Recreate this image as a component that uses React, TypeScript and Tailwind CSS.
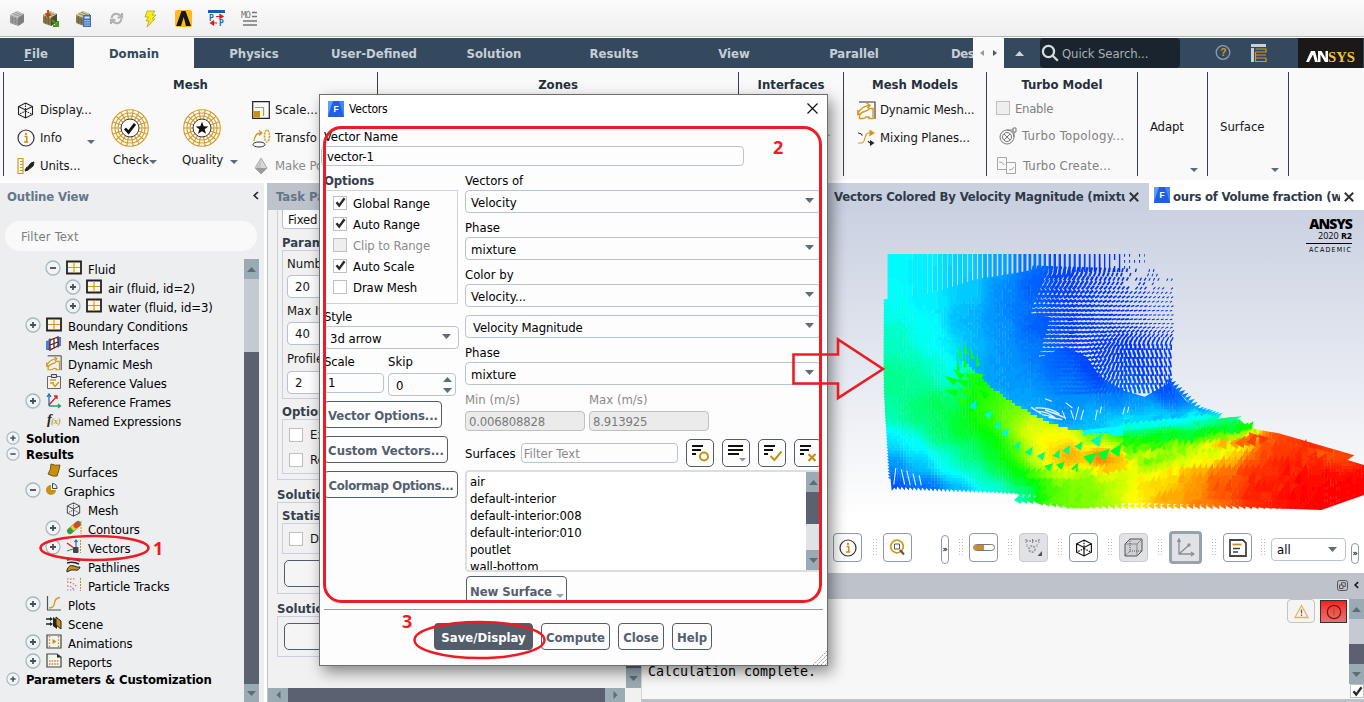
import React from "react";

type Kids = { children?: React.ReactNode };

/* ---------- velocity field ---------- */

const samples: number[][] = [
  [190, 230, 0.25], [300, 240, 0.23], [400, 250, 0.2], [500, 250, 0.15], [600, 250, 0.09], [700, 250, 0.04], [850, 250, 0.01],
  [190, 370, 0.26], [300, 350, 0.23], [420, 330, 0.19], [520, 330, 0.12], [600, 330, 0.06], [700, 330, 0.03],
  [200, 480, 0.31], [300, 450, 0.26], [400, 430, 0.17], [500, 430, 0.13], [620, 440, 0.06], [720, 450, 0.03], [900, 450, 0.02],
  [190, 600, 0.36], [280, 600, 0.35], [330, 560, 0.3], [360, 500, 0.23], [430, 500, 0.17], [520, 520, 0.13], [650, 560, 0.08], [800, 560, 0.04], [950, 560, 0.03],
  [190, 700, 0.33], [260, 700, 0.39], [330, 660, 0.43], [380, 640, 0.4], [355, 600, 0.25], [450, 640, 0.52], [480, 670, 0.56], [500, 600, 0.13], [550, 620, 0.13], [700, 640, 0.12], [850, 650, 0.1], [1000, 640, 0.05],
  [430, 560, 0.16], [600, 600, 0.12], [600, 500, 0.1], [560, 380, 0.1], [470, 560, 0.14],
  [190, 780, 0.22], [260, 790, 0.26], [330, 760, 0.4], [400, 740, 0.47], [470, 720, 0.52], [530, 700, 0.62], [590, 740, 0.74], [640, 765, 0.8], [620, 680, 0.14], [700, 705, 0.12], [580, 655, 0.15],
  [500, 655, 0.55], [560, 695, 0.62], [640, 735, 0.66], [700, 765, 0.72],
  [200, 850, 0.12], [280, 850, 0.18], [350, 840, 0.28], [420, 820, 0.38], [480, 800, 0.47], [540, 820, 0.54], [600, 820, 0.68], [640, 830, 0.8], [720, 800, 0.88], [700, 850, 0.88], [800, 830, 0.94], [860, 815, 0.92],
  [200, 920, 0.04], [300, 925, 0.07], [400, 930, 0.15], [500, 920, 0.25], [580, 935, 0.28], [440, 880, 0.3], [500, 860, 0.45], [560, 880, 0.5], [620, 900, 0.57], [700, 900, 0.58], [640, 960, 0.58], [740, 970, 0.62],
  [760, 900, 0.6], [850, 900, 0.68], [880, 930, 0.75], [820, 970, 0.65], [940, 920, 0.79], [1000, 880, 0.79], [1060, 900, 0.86], [1150, 900, 0.92], [1250, 900, 0.96], [1400, 920, 0.99], [1560, 910, 1],
  [1400, 830, 0.96], [1500, 830, 0.93], [1300, 780, 0.93], [1270, 840, 0.94], [1330, 900, 0.98], [1480, 900, 1],
  [760, 768, 0.55], [850, 775, 0.5], [900, 770, 0.4], [960, 780, 0.5], [950, 830, 0.6], [1000, 810, 0.62], [1050, 800, 0.7],
  [1100, 820, 0.78], [1180, 800, 0.85], [1100, 770, 0.5], [1180, 750, 0.48], [1200, 730, 0.42], [1080, 740, 0.35], [1150, 710, 0.25], [1060, 710, 0.2], [950, 710, 0.18], [860, 735, 0.2], [780, 730, 0.17],
  [900, 680, 0.12], [1050, 670, 0.07], [1000, 950, 0.83], [1100, 950, 0.88], [1440, 980, 1],
];

/* shear line between the jet and the recirculating air above it */
const shear = [[400, 540], [470, 612], [550, 672], [640, 722], [720, 750], [870, 768]];
function side(x: number, y: number) {
  if (x < 400 || x >= 870) return 0;
  const i = shear.findIndex((p, n) => n > 0 && x < p[0]);
  const [x0, y0] = shear[i - 1];
  const [x1, y1] = shear[i];
  return y < y0 + ((x - x0) / (x1 - x0)) * (y1 - y0) ? -1 : 1;
}
const sampleSide = samples.map(([x, y]) => side(x, y));

function speed(x: number, y: number) {
  let s = 0;
  let w = 0;
  const here = side(x, y);
  samples.forEach(([px, py, v], i) => {
    const d = (px - x) ** 2 + (py - y) ** 2;
    let k = Math.exp(-d / 1300) + 0.25 * Math.exp(-d / 4800) + 3 / (d + 900) ** 1.5;
    if (here * sampleSide[i] < 0) k *= 0.03;
    s += v * k;
    w += k;
  });
  return s / w;
}

function jet(v: number) {
  const q = Math.max(0, Math.min(1, Math.round(v * 90) / 90));
  const c = (n: number) => Math.round(255 * Math.max(0, Math.min(1, n)));
  if (q < 0.25) return `rgb(0,${c(q * 3.4 + 0.15)},255)`;
  if (q < 0.5) return `rgb(0,255,${c((0.5 - q) * 4)})`;
  if (q < 0.75) return `rgb(${c((q - 0.5) * 4)},255,0)`;
  return `rgb(255,${c((1 - q) * 4)},0)`;
}

function rand(i: number) {
  const s = Math.sin(i * 12.9898) * 43758.5453;
  return s - Math.floor(s);
}

function add(map: Map<string, string>, key: string, d: string) {
  map.set(key, (map.get(key) || "") + d);
}

const cells = new Map<string, string>();
for (let y = 210; y < 1000; y += 9)
  for (let x = 165; x < 1568; x += 9) {
    add(cells, jet(speed(x + 4, y + 4) + (rand(x + y * 7) - 0.5) * 0.012), `M${x} ${y}h9.6v9.6h-9.6z`);
  }

const cones = new Map<string, string>();
function cone(x: number, y: number, len: number, half: number, deg: number, v: number) {
  const a = (deg * Math.PI) / 180;
  const p = (u: number, w: number) =>
    `${(x + u * Math.cos(a) - w * Math.sin(a)).toFixed(1)} ${(y + u * Math.sin(a) + w * Math.cos(a)).toFixed(1)}`;
  add(cones, jet(v), `M${p(len, 0)}L${p(0, half)}L${p(0, -half)}z`);
}

/* cones carried by the jet near the floor */
for (let i = 0; i < 50; i++) {
  const x = 560 + i * 17;
  const top = x < 760 ? 880 : x < 1000 ? 875 - (x - 760) * 0.2 : 800;
  for (let y = top; y < 955; y += 24) {
    const v = speed(x, y) + (rand(x + y * 3) - 0.5) * 0.035;
    cone(x, y + 14, 38, 12, x < 900 ? -60 : -80, v);
  }
}
/* mixing layer */
for (let i = 0; i < 32; i++) {
  const x = 700 + i * 17;
  const c = 818 - i * 1.9;
  if (x > 740 && x < 1100) cone(x, c - 52, 36, 9, -22, 0.23 + rand(i) * 0.06);
  if (x > 860 && x < 1100) cone(x, c - 72, 36, 8, -24, 0.17 + rand(i + 9) * 0.06);
  if (x > 1060 && x < 1190) cone(x, c - 44, 38, 9, -18, 0.33 + rand(i + 4) * 0.08);
  if (x > 860)
    for (let j = 2; j >= 0; j--)
      cone(x + j * 6, c + j * 20 + (x > 1080 ? -6 : 0), 36, 15, -72 + rand(i + j) * 20, 0.44 + j * 0.09 + rand(i * 3 + j) * 0.09 + (i > 20 ? (i - 20) * 0.011 * j : 0));
}
/* cones leaving the left column */
[[385, 520], [402, 510], [420, 525], [437, 545], [380, 560], [400, 550], [372, 596], [392, 580], [376, 628], [405, 600], [400, 658], [425, 590], [440, 660], [415, 628], [445, 615], [465, 640], [450, 580]].forEach(([x, y], i) =>
  cone(x + 8, y + 12, 38, i < 6 ? 5 : 10, i < 6 ? -95 : -165 + (i % 4) * 9, 0.47 + rand(i) * 0.06),
);
[[430, 685, 0.22], [470, 710, 0.3], [500, 745, 0.32], [520, 765, 0.3], [555, 805, 0.36], [590, 822, 0.38], [625, 835, 0.38], [672, 832, 0.4], [700, 818, 0.38], [735, 805, 0.4], [645, 866, 0.42], [680, 862, 0.46], [725, 872, 0.46], [762, 842, 0.44], [803, 832, 0.46], [842, 822, 0.46], [878, 818, 0.48], [785, 792, 0.33]].forEach(
  ([x, y, v], i) => cone(x, y, x > 740 ? 38 : 26, x > 740 ? 16 : 11, -70 + rand(i) * 30, v),
);
/* ragged edges */
for (let i = 0; i < 60; i++) cone(176 + (i > 30 ? (i - 30) * 0.5 : 0), 362 + i * 9, 7, 5, 180, speed(180, 362 + i * 9));
for (let i = 0; i < 34; i++) cone(205 + i * 12, 918 + i * 0.5, 12, 6, 78, speed(205 + i * 12, 920));
for (let i = 0; i < 42; i++) cone(625 + i * 19, 962 + Math.min(i * 2.5, 10), 18, 11, 60, speed(625 + i * 19, 970));
for (let i = 0; i < 17; i++) cone(996 + i * 9, i < 10 ? 606 + i * 8.8 : 692 + (i - 10) * 3, 20, 7, -35, 0.06 + i * 0.01);
for (let i = 0; i < 10; i++) cone(1235 + i * 28, 772 + i * 7, 30, 16, -8, 0.91 + rand(i) * 0.04);

const strokes = new Map<string, string>();
/* inlet columns at the top */
for (let x = 190; x < 960; x += 14.5) {
  const w = Math.max(2, 15.5 - (x - 190) / 56);
  const end = x < 300 ? 352 : x < 540 ? 350 - (x - 300) * 0.25 : 294 - (x - 540) * 0.1;
  for (let y = 222; y < end; y += 18) {
    if (x > 840 && rand(x + y) < (x - 830) / 190) continue;
    add(strokes, jet(speed(x, y)) + "|" + w.toFixed(0), `M${x} ${y}v${x > 860 ? 8 : 18}`);
  }
}
/* recirculation on the right */
for (let y = 276; y < 650; y += 13)
  for (let x = 600; x < 1008; x += 13) {
    const thin = (x - 590) / 420;
    const down = Math.max(0, Math.min(1, (y - 430) / 90)) * Math.max(0, Math.min(1, (x - 740) / 140));
    const base = -75 + Math.min(1, (y - 276) / 120) * 63;
    const a = ((base * (1 - down) - 100 * down) * Math.PI) / 180;
    const l = 20 - thin * (13 - down * 11);
    if (y < 340 && x > 860 && rand(x * y) < 0.45) continue;
    const ox = Math.round(y / 13) % 2 ? 4 : 0;
    const w = Math.max(2.5, 10 - thin * 8 + down * 3);
    const shade = 1 - 0.35 * Math.min(1, (x - 600) / 140);
    add(strokes, jet(speed(x, y) * shade) + "|" + w.toFixed(0), `M${x + ox} ${y}l${(l * Math.cos(a)).toFixed(1)} ${(l * Math.sin(a)).toFixed(1)}`);
  }

const OUTLINE =
  "M172 358L184 356L300 343L440 298L560 278L620 266L640 280L618 330L600 400L655 412L640 470L620 535L700 500L760 530L800 590L870 632L930 650L1005 606L1050 662L1090 687L1150 706L1138 722L1205 718L1235 745L1320 760L1540 826L1520 840L1568 855L1568 945L1444 990L1300 985L1140 975L1000 972L880 968L760 985L720 985L650 965L600 942L500 936L350 928L205 920L194 932L186 850L175 700L170 560z";

function Plot() {
  return (
    <svg className="h-[307px] w-[539px] shrink-0" viewBox="0 90 1568 921" preserveAspectRatio="none">
      <defs>
        <clipPath id="body">
          <path d={OUTLINE} />
        </clipPath>
      </defs>
      <g clipPath="url(#body)">
        {[...cells].map(([c, d]) => (
          <path key={c} d={d} fill={c} />
        ))}
      </g>
      {[...strokes].map(([k, d]) => (
        <path key={k} d={d} stroke={k.split("|")[0]} strokeWidth={k.split("|")[1]} fill="none" />
      ))}
      {[...cones].map(([c, d]) => (
        <path key={c} d={d} fill={c} />
      ))}
      <g stroke="#eef1fa" fill="none" strokeWidth="4">
        <path d="M612 684q40 -4 70 18M622 694q30 2 50 22M640 690q30 10 60 24M632 704q20 2 40 12M650 712l40 6M600 682l30 20" />
        <path strokeWidth="3" d="M690 692l10 26M715 690l8 26M738 680l-10 40M752 690l-8 30M792 690l-6 30M804 680l-4 20M872 682l-6 22M884 680l-4 18M700 668l20 16M640 656l20 8" />
        <path strokeWidth="3" d="M206 864l-6 50M222 868l10 46M238 872l10 44M256 880l8 36M274 886l6 30" />
      </g>
    </svg>
  );
}

/* ---------- small parts ---------- */

function Caret({ c = "#5f6b76", up = false, small = false }: { c?: string; up?: boolean; small?: boolean }) {
  return (
    <svg className={small ? "h-[4px] w-[8px]" : "h-[5px] w-[9px]"} viewBox="0 0 8 4" preserveAspectRatio="none">
      <path d={up ? "M0 4L4 0L8 4z" : "M0 0h8L4 4z"} fill={c} />
    </svg>
  );
}

function FluentIcon() {
  return (
    <svg className="size-4 shrink-0" viewBox="0 0 16 16">
      <path d="M0 0h16v16H0z" fill="#3f86f7" />
      <path d="M5 0h6l5 16H0z" fill="#1f5fe0" />
      <path d="M0 0h5L0 13z" fill="#5aa0ff" />
      <text x="5.4" y="11.3" fontSize="8.5" fontWeight="bold" fill="#fff" fontFamily="Liberation Sans, sans-serif">F</text>
    </svg>
  );
}

function Check({ on = false, dis = false }: { on?: boolean; dis?: boolean }) {
  return (
    <span className={"flex size-[14px] shrink-0 items-center justify-center border border-[#c0c0c0] " + (dis ? "bg-[#eeeeee]" : "bg-white")}>
      {on && (
        <svg className="size-[11px]" viewBox="0 0 11 11">
          <path d="M1.5 5.2L4.2 8.6L9.5 1.2" fill="none" stroke="#2b2b2b" strokeWidth="2.4" />
        </svg>
      )}
    </span>
  );
}

function CubeIcon({ c = "#222", s = "size-[17px]" }: { c?: string; s?: string }) {
  return (
    <svg className={s} viewBox="0 0 17 17" fill="none" stroke={c} strokeWidth="1.1">
      <path d="M8.5 1L15.5 4.5V12.5L8.5 16L1.5 12.5V4.5zM1.5 4.5L8.5 8L15.5 4.5M8.5 8V16" />
      <path strokeDasharray="1.5 1" d="M8.5 1V9L1.5 12.5M8.5 9L15.5 12.5" />
    </svg>
  );
}

function InfoIcon() {
  return (
    <svg className="size-[18px]" viewBox="0 0 18 18">
      <circle cx="9" cy="9" r="8" fill="none" stroke="#333" strokeWidth="1.2" />
      <path d="M7.5 7.5h2.2v5.3M7 13h4.2" stroke="#c98f12" strokeWidth="1.5" fill="none" />
      <circle cx="9" cy="4.9" r="1.1" fill="#c98f12" />
    </svg>
  );
}

function DynIcon({ s = "size-[19px]" }: { s?: string }) {
  return (
    <svg className={s} viewBox="0 0 19 19" fill="none">
      <path d="M2 1h16v17" stroke="#333" strokeWidth="1.1" />
      <path d="M1 12.500Q4 5.500 12 4.500M9.500 2l3.500 2.300-2.500 3M.8 9v4.500l4-1M2.500 17.500v-3q1-3 5-4t5-3h3.500v10h-4v-1.500h-3q-1 1.500-3 1.500z" stroke="#d39a22" strokeWidth="1.400" />
    </svg>
  );
}

function WheelIcon({ star = false }: { star?: boolean }) {
  const spokes = Array.from({ length: 18 }, (_, i) => {
    const a = (i * Math.PI) / 9;
    return `M${19 + 9 * Math.cos(a)} ${19 + 9 * Math.sin(a)}L${19 + 18.5 * Math.cos(a)} ${19 + 18.5 * Math.sin(a)}`;
  }).join("");
  return (
    <svg className="size-[38px]" viewBox="0 0 38 38" fill="none">
      <g stroke="#d39a22" strokeWidth="1.1">
        <circle cx="19" cy="19" r="18.3" />
        <circle cx="19" cy="19" r="15" />
        <circle cx="19" cy="19" r="12" />
        <path d={spokes} />
      </g>
      <circle cx="19" cy="19" r="9" fill="#fff" stroke="#333" />
      {star ? (
        <path d="M19 12.800l1.700 4.400 4.700.2-3.700 2.900 1.300 4.500-4-2.600-4 2.600 1.300-4.500-3.700-2.900 4.700-.2z" fill="#111" />
      ) : (
        <path d="M14 19.500l3.500 3.800 6.500-8.500" stroke="#111" strokeWidth="2.800" />
      )}
    </svg>
  );
}

/* ---------- top of the window ---------- */

function Cube3({ gray = false, children }: { gray?: boolean } & Kids) {
  return (
    <svg className="size-[17px]" viewBox="0 0 17 17">
      <path d="M1 5l7-4 7 3v8l-6 4-8-3z" fill={gray ? "#a3a3a3" : "#8f8455"} />
      <path d="M1 5l7-4 7 3-6 4z" fill={gray ? "#c6c6c6" : "#d6cda0"} />
      <path d="M9 8l6-4v8l-6 4z" fill={gray ? "#828282" : "#4f4727"} />
      <path d="M3.500 6.200v8M6.300 7v8M1 8l8 3 6-4M1 10.500l8 3 6-4M11 6.800v8M13 5.500v8M3.500 3.600l8 3M6 2.300l7.500 3" stroke={gray ? "#787878" : "#5d532c"} strokeWidth=".6" fill="none" />
      {children}
    </svg>
  );
}

function QuickBar() {
  return (
    <div className="flex h-[38px] items-center gap-[16px] border-b border-white bg-linear-to-b from-[#fbfbfb] to-[#efefef] pl-[9px] shadow-[inset_0_-1px_0_#b4b4b4]">
      <Cube3 gray />
      <Cube3>
        <path d="M6 0v5M3.500 3.500l2.500 3 2.500-3" stroke="#c03a1c" strokeWidth="1.800" fill="none" />
        <path d="M10 10l5.500 5.500M16 11v5h-5" stroke="#3f9a22" strokeWidth="2.200" fill="none" />
      </Cube3>
      <Cube3>
        <path d="M8 5h8v12H8z" fill="#3f6fb8" />
        <path d="M9.500 6.500h5v2h-5zM9.500 10h1.200v1.200H9.500zM11.500 10h1.200v1.200h-1.200zM13.400 10h1.200v1.200h-1.200zM9.500 12.300h1.200v1.200H9.500zM11.500 12.300h1.200v1.200h-1.200zM13.400 12.300h1.200v1.200h-1.200zM9.500 14.500h1.200v1.200H9.500zM11.500 14.500h1.200v1.200h-1.200zM13.400 14.500h1.200v1.200h-1.200z" fill="#dbe8fb" />
      </Cube3>
      <svg className="size-[17px]" viewBox="0 0 17 17" fill="none" stroke="#b2b2b2" strokeWidth="2.200">
        <path d="M3.500 8Q5 3 9 4t3.500 2.500M13.500 9Q12 14 8 13T4.500 10.500M14 3v4.500H9.500M3 14V9.800h4.500" />
      </svg>
      <svg className="size-[18px]" viewBox="0 0 18 18">
        <path d="M6 1h8l-3 4h4l-4 4h3L6 17l2-6H5l2.500-4H4z" fill="#f6ec1c" stroke="#a89d18" strokeWidth=".7" />
      </svg>
      <svg className="size-[17px]" viewBox="0 0 17 17">
        <rect width="17" height="17" rx="2" fill="#fdbb1f" />
        <path d="M6.500 1h4l5.500 15h-5L8.700 7 6 16H1.200z" fill="#161616" />
      </svg>
      <svg className="size-[17px]" viewBox="0 0 17 17">
        <path d="M0 0h17v3H0z" fill="#0d5fb8" />
        <text x="1" y="10.500" fontSize="8" fontWeight="bold" fill="#1b66bb" fontFamily="DejaVu Sans Mono, monospace">P</text>
        <text x="11" y="16" fontSize="8" fontWeight="bold" fill="#1b66bb" fontFamily="DejaVu Sans Mono, monospace">P</text>
        <path d="M8 6.500h5M12 4.500l3 2-3 2zM9 13H5M5.500 11l-3 2 3 2z" stroke="#ee1010" fill="#ee1010" strokeWidth="1.200" />
      </svg>
      <svg className="size-[17px]" viewBox="0 0 17 17">
        <text x="0" y="8" fontSize="9" fill="#777" fontFamily="DejaVu Sans Mono, monospace" textLength="10">MO</text>
        <path d="M11 2.500h5M11 6.500h5M2 11h14M2 15h14" stroke="#777" strokeWidth="1.600" />
      </svg>
    </div>
  );
}

function MenuBar() {
  const tab = "w-[120px] shrink-0 text-center";
  return (
    <div className="flex h-[30px] items-center bg-[#34495e] font-bold text-[#c6cfd8]">
      <div className="w-[74px] shrink-0 pr-[2px] text-center leading-[33px]"><span className="underline underline-offset-2">F</span>ile</div>
      <div className="h-[30px] w-[120px] shrink-0 bg-[#f9f9f9] text-center leading-[31px] text-[#34495e]">Domain</div>
      <div className="flex w-[779px] overflow-hidden leading-[33px]">
        <div className={tab}>Physics</div>
        <div className={tab}>User-Defined</div>
        <div className={tab}>Solution</div>
        <div className={tab}>Results</div>
        <div className={tab}>View</div>
        <div className={tab}>Parallel</div>
        <div className="w-[59px] shrink-0 pl-[37px] tracking-[-0.400px]">Des</div>
      </div>
      <div className="flex h-[30px] w-[31px] shrink-0 items-center justify-around bg-[#f9f9f9] px-[2px]">
        <svg className="h-[6px] w-[4px]" viewBox="0 0 4 6"><path d="M4 0v6L0 3z" fill="#999" /></svg>
        <svg className="h-[6px] w-[4px]" viewBox="0 0 4 6"><path d="M0 0v6l4-3z" fill="#555" /></svg>
      </div>
      <div className="flex w-[36px] shrink-0 justify-center pr-[6px]"><Caret up c="#cbd3da" /></div>
      <div className="flex h-[30px] w-[140px] shrink-0 items-center gap-[3px] rounded bg-[#19242e] pl-px font-normal text-[#aab0b5]">
        <svg className="size-[18px]" viewBox="0 0 18 18" fill="none" stroke="#d5dade" strokeWidth="2.300"><circle cx="7.500" cy="7.500" r="5.600" /><path d="M11.500 11.500l5.300 5.300" /></svg>
        <span className="pt-px tracking-[-0.120px]">Quick Search...</span>
      </div>
      <svg className="ml-[35px] size-[16px] shrink-0" viewBox="0 0 16 16">
        <circle cx="8" cy="7.500" r="6.800" fill="none" stroke="#8f9eab" strokeWidth="1.300" />
        <text x="5.200" y="11.300" fontSize="10" fontWeight="bold" fill="#d39a22" fontFamily="Liberation Sans, sans-serif">?</text>
      </svg>
      <svg className="ml-[20px] size-[18px] shrink-0" viewBox="0 0 18 18">
        <path d="M0 0h15v3H0zM0 4h3v14H0z" fill="#c8d0dc" />
        <path d="M4.500 5h10.500v3H4.500M4.500 8v3h10.500M4.500 11v3h10.500M15 14v3.500H4.500V14" fill="none" stroke="#d39a22" strokeWidth="1.200" />
      </svg>
      <div className="mr-px ml-auto flex h-[30px] w-[65px] items-center bg-[#1b1917] pt-[5px] pl-[8px]">
        <svg className="h-[16px] w-[54px]" viewBox="0 0 54 16">
          <path d="M0 14L5 3h4l3 11H9L7 6.500 3 14zM12 14V3h3.500l4 7V3H22v11h-3l-4.500-7.500V14z" fill="#fff" />
          <text x="22" y="14" fontSize="15.500" fill="#edc33d" fontFamily="Liberation Serif, serif" textLength="27" lengthAdjust="spacingAndGlyphs">SYS</text>
        </svg>
      </div>
    </div>
  );
}

function Group({ title, w, children }: { title?: string; w: string } & Kids) {
  return (
    <div className={"h-[104px] shrink-0 border-l border-[#34404f] " + w}>
      <div className="h-[22px] pt-[5px] text-center font-bold text-[#25303d]">{title}</div>
      {children}
    </div>
  );
}

function Tool({ icon, children, cls = "" }: { icon: React.ReactNode; cls?: string } & Kids) {
  return (
    <div className={"flex h-[28px] items-center whitespace-nowrap " + cls}>
      <span className="flex w-[23px] shrink-0">{icon}</span>
      {children}
    </div>
  );
}

function Ribbon() {
  return (
    <div className="flex h-[112px] bg-[#f9f9f9] pt-[4px] pl-[3px]">
      <Group title="Mesh" w="w-[374px]">
        <div className="flex pl-[13px]">
          <div className="flex w-[94px] flex-col pt-[2px] tracking-[-0.080px]">
            <Tool icon={<CubeIcon />}>Display...</Tool>
            <Tool icon={<InfoIcon />}>Info<span className="mt-[8px] ml-auto pr-[16px]"><Caret small /></span></Tool>
            <Tool icon={<svg className="size-[18px]" viewBox="0 0 18 18" fill="none"><path d="M1 1.500h5v15H1zM3 4.500h3M3 7.500h3M3 10.500h3M3 13.500h3" stroke="#d39a22" strokeWidth="1.200" /><path d="M9 12l5-6 3-1-1 4-5 4-3 1zM8 13l2-3" fill="#222" stroke="#222" /></svg>}>Units...</Tool>
          </div>
          <div className="flex w-[38px] flex-col items-center pt-[15px]">
            <WheelIcon />
            <div className="mt-[5px] flex items-center pl-[10px] whitespace-nowrap">Check<span className="pt-[4px]"><Caret small /></span></div>
          </div>
          <div className="ml-[32px] flex w-[60px] flex-col pt-[15px]">
            <div className="pl-[2px]"><WheelIcon star /></div>
            <div className="mt-[5px] flex items-center gap-[7px] pl-px tracking-[-0.100px] whitespace-nowrap">Quality<span className="pt-[4px]"><Caret small /></span></div>
          </div>
          <div className="ml-[11px] w-[120px] overflow-hidden pt-[2px]">
            <Tool icon={<svg className="size-[18px]" viewBox="0 0 18 18" fill="none"><path d="M.7.7h16.600v16.600H.7z" stroke="#222" strokeWidth="1.200" /><path d="M3 6.500h8.500V15" stroke="#d39a22" strokeWidth="1.200" /><path d="M1.500 10h6.500v6.500H1.500z" fill="#c98f12" /></svg>}>Scale...</Tool>
            <Tool icon={<svg className="size-[19px]" viewBox="0 0 19 19" fill="none"><path d="M2 12Q3 4 9 4M7 1.500L10 4 7 6.500" stroke="#d39a22" strokeWidth="1.300" /><ellipse cx="7" cy="15.500" rx="6" ry="2.500" stroke="#333" /><ellipse cx="15" cy="7" rx="2.500" ry="6" stroke="#d39a22" strokeWidth="1.500" strokeDasharray="2 1" /></svg>}>Transfo</Tool>
            <Tool cls="text-[#8a8a8a]" icon={<svg className="size-[18px]" viewBox="0 0 18 18"><path d="M9 1l6 10-6 6-6-6z" fill="#d8d8d8" stroke="#a5a5a5" /><path d="M9 1v16l-6-6z" fill="#c5c5c5" /><path d="M3 11h12L9 17z" fill="#9c9c9c" /></svg>}>Make Po</Tool>
          </div>
        </div>
      </Group>
      <Group title="Zones" w="w-[361px]" />
      <Group title="Interfaces" w="w-[105px]">
        <div className="pt-[30px] pl-[88px] text-[#999]">.</div>
      </Group>
      <Group title="Mesh Models" w="w-[143px]">
        <div className="pt-[2px] pl-[13px] tracking-[-0.200px]">
          <Tool icon={<DynIcon />}>Dynamic Mesh...</Tool>
          <Tool cls="tracking-[-0.100px]" icon={<svg className="size-[18px]" viewBox="0 0 18 18" fill="none" strokeWidth="1.200"><path d="M1 14h3q3 0 4-5t4-5h3" stroke="#d39a22" /><path d="M13 1.500L17 4l-4 2.500z" fill="#c98f12" stroke="#d39a22" /><path d="M1 4q3 0 4.500 2.500M11 12q1 2 3 2" stroke="#222" /><path d="M13 11l4.500 3-4.500 3z" fill="#222" /></svg>}>Mixing Planes...</Tool>
        </div>
      </Group>
      <Group title="Turbo Model" w="w-[151px]">
        <div className="pl-[9px] text-[#808080]">
          <div className="flex h-[27px] items-center gap-[5px] tracking-[-0.300px]"><Check dis /><span className="pt-[2px]">Enable</span></div>
          <Tool cls="pt-px pl-[3px] tracking-[0.350px]" icon={<svg className="size-[18px]" viewBox="0 0 18 18" fill="none" stroke="#777"><circle cx="8" cy="10" r="7" /><circle cx="8" cy="10" r="4.500" /><path d="M5 7l6 6M11 7l-6 6M8 3h6M14 1h3v4h-3zM15 5v5" /></svg>}>Turbo Topology...</Tool>
          <Tool cls="mt-[2px] pt-px pl-px tracking-[0.150px]" icon={<svg className="size-[19px]" viewBox="0 0 19 19" fill="none" stroke="#a5a5a5"><path d="M.5 1.500h9v12h-9zM9.500 6.500h9v11h-9zM2 6q3-1 5 3M12 14q4 0 5-3" /></svg>}><span className="pl-[3px]">Turbo Create...</span></Tool>
        </div>
      </Group>
      <Group w="w-[70px]">
        <div className="flex h-[82px] flex-col pt-[25px] pl-[12px] tracking-[-0.150px]">Adapt<span className="mt-auto pb-[4px] pl-[40px]"><Caret small /></span></div>
      </Group>
      <Group w="w-[81px]">
        <div className="flex h-[82px] flex-col pt-[25px] pl-[12px]">Surface<span className="mt-auto pb-[4px] pl-[51px]"><Caret small /></span></div>
      </Group>
      <Group w="w-[60px]" />
    </div>
  );
}

/* ---------- outline tree ---------- */

const treeIcons: Record<string, React.ReactNode> = {
  grid: <><path d="M1 1.500h14v12H1z" stroke="#222" strokeWidth="1.800" fill="#fff8e8" /><path d="M8 2v11M2 7.500h12" stroke="#d39a22" strokeWidth="1.200" /></>,
  iface: <><path d="M0 5l5-1v10H0zM11 1h4v9h-4z" fill="#4a7de0" /><path d="M4 4l8-3v9l-8 4zM4 9l8-3M8 3v9" fill="#fff" stroke="#5b1212" strokeWidth="1.200" /><circle cx="4" cy="4" r="1" fill="#fff" stroke="#5b1212" /><circle cx="4" cy="13" r="1" fill="#fff" stroke="#5b1212" /><circle cx="12" cy="10" r="1" fill="#fff" stroke="#5b1212" /><circle cx="12" cy="2" r="1" fill="#fff" stroke="#5b1212" /></>,
  clip: <><path d="M1.500 2.500h13v12h-13z" stroke="#666" fill="#f7f3ea" /><path d="M5.500.5h5v3h-5z" stroke="#444" fill="#ddd" /><path d="M4 6h6M4 9h4M7 10l2 2.500L13 8" stroke="#d39a22" strokeWidth="1.400" /></>,
  axes: <><path d="M3 13h11M12 11l2.500 2-2.500 2" stroke="#27a05a" strokeWidth="1.300" /><path d="M3 1v12M1 4l2-3 2 3" stroke="#1d6fc0" strokeWidth="1.300" /><path d="M3 12l8-9M8 3h3v3" stroke="#e02020" strokeWidth="1.300" /></>,
  fx: <><text x="1" y="12" fontSize="14" fontStyle="italic" fontWeight="bold" fill="#222" fontFamily="Liberation Serif, serif">f</text><text x="5" y="12" fontSize="9" fontStyle="italic" fill="#d39a22" fontFamily="Liberation Serif, serif" fontWeight="bold" textLength="10">(x)</text></>,
  surf: <path d="M5 1q4 2 9 1-1 6-3 11-4 1-9-2 3-4 3-10z" fill="#c98f12" stroke="#7a5507" />,
  pie: <><path d="M6 3a5 5 0 1 0 5 5H6z" fill="#c98f12" /><path d="M7.500 1.500v5H12A5 5 0 0 0 7.500 1.500z" stroke="#444" /></>,
  cont: <><path d="M4 11l8-7" stroke="#3a9a3a" strokeWidth="6" strokeLinecap="round" /><path d="M6 9.200l5-4.400" stroke="#e7cf2a" strokeWidth="5" /><path d="M10 5.700l1.500-1.300" stroke="#e0402a" strokeWidth="5" strokeLinecap="round" /><path d="M15 1v13" stroke="#c98f12" strokeDasharray="2 1" /></>,
  vec: <><path d="M1 4l7 5" stroke="#e02020" strokeWidth="1.300" /><path d="M10 8V1M8.500 3L10 1l1.500 2" stroke="#1d6fc0" strokeWidth="1.200" /><path d="M1 12l6-2" stroke="#27a05a" strokeWidth="1.300" /><rect x="7" y="8" width="5.500" height="6" rx="1" fill="#444" /><path d="M14.500 1v13" stroke="#c98f12" strokeDasharray="2 1" /></>,
  pathl: <><path d="M1 2q6-2 13 1M1 5q6-2 12 1" stroke="#222" strokeWidth="1.400" /><path d="M1 12q2-6 7-4t6 1q-1 4-5 3t-8 2z" fill="#c98f12" stroke="#222" /></>,
  part: <><path d="M1 2h8M1 5q6 0 10 5M1 9q5 0 7 4" stroke="#e05a5a" strokeWidth="1.200" strokeDasharray="1.500 1.500" /><path d="M1 13h9" stroke="#6fa0e0" strokeDasharray="1.500 1.500" /><path d="M14.500 1v13" stroke="#c98f12" strokeDasharray="2 1" /></>,
  plot: <><path d="M1.500 0v14H15" stroke="#555" strokeWidth="1.200" /><path d="M3 12q5 0 5.500-5T14 1.500" stroke="#d39a22" strokeWidth="1.400" /></>,
  scene: <><path d="M7 2l4 3v9L7 11z" fill="#222" /><path d="M10 2l5 4v8l-5-4z" fill="#c98f12" stroke="#222" /><path d="M0 4h5M0 9h5" stroke="#222" strokeWidth="1.300" /><path d="M4 2l3 2-3 2zM4 7l3 2-3 2z" fill="#222" /></>,
  anim: <><path d="M1 1h14v13H1z" stroke="#444" strokeWidth="1.200" fill="#f4f4f4" /><path d="M3.500 2v12M12.500 2v12" stroke="#c98f12" strokeWidth="1.400" strokeDasharray="1.600 1.600" /><path d="M6.500 5l4 2.500-4 2.500z" fill="#c98f12" /></>,
  rep: <><path d="M1 1h10l4 3v10H1z" stroke="#444" strokeWidth="1.200" fill="#f4f4f4" /><path d="M11 1v3.500h4z" fill="#222" /><path d="M3 8h10M3 11h10" stroke="#c98f12" strokeWidth="1.600" strokeDasharray="1.600 1" /></>,
};

type Node = [string, number, string, string];
const tree: Node[] = [
  ["Fluid", 2, "-", "grid"], ["air (fluid, id=2)", 3, "+", "grid"], ["water (fluid, id=3)", 3, "+", "grid"],
  ["Boundary Conditions", 1, "+", "grid"], ["Mesh Interfaces", 1, "", "iface"], ["Dynamic Mesh", 1, "", "dyn"],
  ["Reference Values", 1, "", "clip"], ["Reference Frames", 1, "+", "axes"], ["Named Expressions", 1, "", "fx"],
  ["Solution", 0, "+", ""], ["Results", 0, "-", ""], ["Surfaces", 1, "", "surf"], ["Graphics", 1, "-", "pie"],
  ["Mesh", 2, "", "cube"], ["Contours", 2, "+", "cont"], ["Vectors", 2, "+", "vec"], ["Pathlines", 2, "", "pathl"],
  ["Particle Tracks", 2, "", "part"], ["Plots", 1, "+", "plot"], ["Scene", 1, "", "scene"], ["Animations", 1, "+", "anim"],
  ["Reports", 1, "+", "rep"], ["Parameters & Customization", 0, "+", ""],
];
const indent = ["pl-[6px]", "pl-[25px]", "pl-[45px]", "pl-[65px]"];

function Expander({ s, big }: { s: string; big: boolean }) {
  return (
    <svg className={big ? "mb-px size-[16px] shrink-0" : "size-[14px] shrink-0"} viewBox="0 0 16 16">
      {s && (
        <>
          <circle cx="8" cy="8" r="7" fill="#f1f3f5" stroke="#a9b7be" strokeWidth="1.300" />
          <path d={s === "+" ? "M5 8h6M8 5v6" : "M5 8h6"} stroke="#44505c" strokeWidth="1.800" />
        </>
      )}
    </svg>
  );
}

function Outline() {
  return (
    <div className="flex w-[264px] shrink-0 flex-col bg-[#eceef0]">
      <div className="flex h-[27px] items-center justify-between pr-[5px] pl-[7px] font-bold text-[#64768a]">
        <span className="tracking-[-0.150px]">Outline View</span>
        <svg className="mb-[3px] h-[9px] w-[6px]" viewBox="0 0 6 9"><path d="M5 1L1.200 4.500 5 8" stroke="#222" strokeWidth="1.600" fill="none" /></svg>
      </div>
      <div className="mt-[11px] ml-[5px] flex h-[30px] w-[252px] items-center rounded-full bg-[#f9f9f9] pt-px pl-[16px] tracking-[0.150px] text-[#7d7d7d]">Filter Text</div>
      <div className="mt-[8px] flex h-[443px]">
        <div className="w-[244px] tracking-[-0.120px]">
          {tree.map(([t, l, e, ic]) => (
            <div key={t} className={"flex items-center whitespace-nowrap text-black " + indent[l] + (l ? " h-[19px]" : " h-[16px] font-bold")}>
              <Expander s={e} big={l > 0} />
              {l > 0 && (
                <span className={"mb-px flex shrink-0 " + (ic === "pie" ? "w-[23px] pl-[4px]" : "w-[27px] pl-[5px]")}>
                  {ic === "cube" ? <CubeIcon s="size-[15px]" c="#444" /> : ic === "dyn" ? <DynIcon s="size-[16px]" /> : <svg className="size-[16px]" viewBox="0 0 16 16" fill="none">{treeIcons[ic]}</svg>}
                </span>
              )}
              <span className={l ? "pt-[2px]" : "pt-px pl-[6px]"}>{t}</span>
            </div>
          ))}
        </div>
        <div className="flex w-[15px] flex-col bg-[#5b6170]">
          <div className="flex h-[20px] items-center justify-center bg-[#9aabb3]"><Caret up /></div>
          <div className="h-[73px] bg-[#c3cad1]" />
          <div className="mt-auto flex h-[18px] items-center justify-center bg-[#9aabb3]"><Caret /></div>
        </div>
      </div>
    </div>
  );
}

/* ---------- task page ---------- */

function Task() {
  const box = "border border-[#c9cfdf]";
  const val = "flex h-[23px] w-[200px] items-center rounded border border-[#b8c1cd] bg-[#fdfdfd] pt-px pl-[7px]";
  return (
    <div className="flex w-[374px] shrink-0 flex-col overflow-hidden border-l border-[#c0c4ca] bg-[#f1f1f1]">
      <div className="flex h-[27px] shrink-0 items-center bg-[#bec3cb] pl-[8px] font-bold text-[#64768a]">Task Pa</div>
      <div className="flex h-[478px]">
        <div className="w-[358px] pl-[9px]">
          <div className="h-[270px] border-b border-l border-[#c9cfdf] pl-[4px]">
            <div className="flex h-[19px] w-[200px] items-center rounded-b border border-t-0 border-[#b8c1cd] bg-[#fdfdfd] pt-px pl-[5px] tracking-[-0.200px]">Fixed</div>
            <div className="flex h-[21px] items-center pt-[6px] font-bold text-[#34404f]">Param</div>
            <div className={"h-[149px] pl-[4px] " + box}>
              <div className="flex h-[24px] items-center pt-px">Numb</div>
              <div className={val}>20</div>
              <div className="flex h-[24px] items-center pt-px">Max It</div>
              <div className={val}>40</div>
              <div className="flex h-[26px] items-center pt-px">Profile</div>
              <div className={val}>2</div>
            </div>
            <div className="flex h-[20px] items-center pt-[5px] font-bold text-[#34404f]">Option</div>
            <div className={"h-[55px] pt-[2px] pl-[6px] " + box}>
              <div className="flex h-[25px] items-center gap-[7px]"><Check />Ex</div>
              <div className="flex h-[25px] items-center gap-[7px]"><Check />Re</div>
            </div>
          </div>
          <div className="flex h-[22px] items-center pt-[7px] font-bold text-[#34404f]">Solutio</div>
          <div className={"h-[92px] pl-[4px] " + box}>
            <div className="flex h-[20px] items-center pt-[6px] font-bold text-[#34404f]">Statis</div>
            <div className={"flex h-[31px] items-center gap-[7px] pl-[6px] " + box}><Check />Da</div>
            <div className="mt-[6px] ml-[2px] h-[27px] w-[200px] rounded-[5px] border border-[#535c69] bg-[#f5f5f5]" />
          </div>
          <div className="flex h-[22px] items-center pt-[7px] font-bold text-[#34404f]">Solutio</div>
          <div className={"h-[41px] pt-[6px] pl-[6px] " + box}>
            <div className="h-[27px] w-[200px] rounded-[5px] border border-[#535c69] bg-[#f5f5f5]" />
          </div>
        </div>
        <div className="flex w-[15px] flex-col justify-end bg-[#5b6170]">
          <div className="flex h-[20px] items-center justify-center bg-[#9aabb3]"><Caret /></div>
        </div>
      </div>
      <div className="flex h-[14px] w-[357px] items-center justify-between bg-[#5b6170]">
        <div className="flex h-[14px] w-[20px] items-center justify-center bg-[#9aabb3]"><svg className="h-[8px] w-[5px]" viewBox="0 0 4 8"><path d="M4 0v8L0 4z" fill="#5f6b76" /></svg></div>
        <div className="flex h-[14px] w-[20px] items-center justify-center bg-[#9aabb3]"><svg className="h-[8px] w-[5px]" viewBox="0 0 4 8"><path d="M0 0v8l4-4z" fill="#5f6b76" /></svg></div>
      </div>
    </div>
  );
}

/* ---------- graphics and console ---------- */

function Dots() {
  return (
    <svg className="h-[17px] w-[5px] shrink-0" viewBox="0 0 5 17">
      <path d="M.5 0v17M3.500 0v17" stroke="#bdbdbd" strokeDasharray="1 2" />
    </svg>
  );
}

function GBtn({ dis = false, children }: { dis?: boolean } & Kids) {
  return (
    <div className={"flex h-[29px] w-[29px] shrink-0 items-center justify-center rounded border " + (dis ? "border-[#c8cacf] bg-[#e1e2e6]" : "border-[#8c9aa6] bg-white")}>{children}</div>
  );
}

function Close() {
  return (
    <svg className="size-[10px] shrink-0" viewBox="0 0 10 10"><path d="M.8.8l8.400 8.400M9.200.8L.8 9.200" stroke="#333" strokeWidth="2" /></svg>
  );
}

function Graphics() {
  return (
    <div className="flex w-[723px] shrink-0 flex-col">
      <div className="flex h-[27px] items-center bg-[#c9d0e0] font-bold whitespace-nowrap text-[#2f3a48]">
        <div className="flex w-[508px] items-center pl-[171px]">
          <FluentIcon />
          <div className="ml-[6px] w-[291px] overflow-hidden tracking-[-0.180px]">Vectors Colored By Velocity Magnitude (mixtu</div>
          <span className="ml-[4px]"><Close /></span>
        </div>
        <div className="flex h-full w-[215px] items-center bg-white pl-[5px]">
          <span className="mb-[4px]"><FluentIcon /></span>
          <div className="ml-[3px] w-[167px] overflow-hidden tracking-[-0.240px]">ours of Volume fraction (w</div>
          <span className="ml-[4px]"><Close /></span>
        </div>
      </div>
      <div className="relative flex h-[307px] justify-end bg-linear-to-b from-[#cad1e1] to-white">
        <Plot />
        <div className="absolute top-[6px] right-[12px] w-[46px] text-right text-black">
          <div className="font-['Open_Sans',sans-serif] text-[14px] leading-[15px] font-extrabold tracking-[-0.900px]">ANSYS</div>
          <div className="font-['Open_Sans',sans-serif] text-[9px] leading-[9px]">2020 <b>R2</b></div>
          <div className="mt-[3px] border-t border-black pt-[2px] text-[7px] leading-[9px] tracking-[1.200px] whitespace-nowrap">ACADEMIC</div>
        </div>
      </div>
      <div className="flex h-[56px] items-center bg-white pt-[5px] pl-[192px]">
        <GBtn><InfoIcon /></GBtn>
        <span className="mx-[11px] flex"><Dots /></span>
        <span className="-ml-[6px] flex"><GBtn><svg className="size-[17px]" viewBox="0 0 17 17" fill="none"><circle cx="8" cy="7.500" r="6.300" stroke="#d39a22" strokeWidth="1.800" /><path d="M5.500 5h5v5h-5z" stroke="#555" /><path d="M11 11l4 4.500" stroke="#555" strokeWidth="2" /></svg></GBtn></span>
        <div className="mt-[4px] ml-[29px] flex h-[29px] w-[8px] items-center justify-center rounded-full border border-[#8c9aa6] pb-[2px] text-[9px] font-bold">»</div>
        <span className="mr-[5px] ml-[10px] flex"><Dots /></span>
        <GBtn><svg className="h-[7px] w-[22px]" viewBox="0 0 22 7"><rect x=".5" y=".5" width="21" height="6" rx="3" fill="#fff" stroke="#777" /><path d="M3 1h8v5H3Q1 6 1 3.500T3 1z" fill="#c98f12" /></svg></GBtn>
        <span className="mr-[6px] ml-[10px] flex"><Dots /></span>
        <GBtn dis><svg className="size-[19px]" viewBox="0 0 19 19" fill="none" stroke="#9fa3a8"><path d="M2 3h13M2 1v4M8.500 1v4M15 1v4" stroke="#777" strokeDasharray="2 1" /><circle cx="8" cy="11" r="3" strokeWidth="2" strokeDasharray="2 1" /><path d="M3 6v3M13 6v3" /><path d="M18 13v5h-4.500z" fill="#555" stroke="none" /></svg></GBtn>
        <span className="mr-[6px] ml-[10px] flex"><Dots /></span>
        <GBtn><CubeIcon c="#111" s="size-[18px]" /></GBtn>
        <span className="mr-[6px] ml-[10px] flex"><Dots /></span>
        <GBtn dis><svg className="size-[19px]" viewBox="0 0 19 19" fill="none" stroke="#555"><path d="M1 6L6 1h12v12l-5 5H1z" fill="#cfd0d3" /><path d="M1 6h12V18M13 6l5-5" stroke="#888" /><path d="M6 1v12h12M6 13l-5 5" strokeDasharray="1 1" /></svg></GBtn>
        <span className="mr-[6px] ml-[10px] flex"><Dots /></span>
        <div className="flex h-[33px] w-[33px] shrink-0 items-center justify-center rounded border-[3px] border-[#96a3ad] bg-[#e1e2e6]"><svg className="size-[19px]" viewBox="0 0 19 19" fill="none" stroke="#8a8d92" strokeWidth="1.300"><path d="M3 2v14h14M3 16L13 7M1.500 4L3 1l1.500 3M15 14l3 2-3 2" /><circle cx="13" cy="7" r="1" /></svg></div>
        <span className="mr-[6px] ml-[10px] flex"><Dots /></span>
        <GBtn><svg className="size-[18px]" viewBox="0 0 18 18" fill="none"><path d="M1 1h13l3 3v13H1z" stroke="#444" strokeWidth="1.800" /><path d="M3.500 5.500h9" stroke="#c98f12" strokeWidth="1.800" /><path d="M4 9.500h7M4 13h5" stroke="#444" strokeWidth="1.400" /></svg></GBtn>
        <span className="mr-[5px] ml-[9px] flex"><Dots /></span>
        <div className="mt-[3px] flex h-[23px] w-[75px] shrink-0 items-center justify-between rounded border border-[#b8c4d0] pr-[8px] pl-[5px] text-black"><span className="pt-px">all</span><Caret /></div>
        <div className="mt-[12px] ml-[5px] flex h-[21px] w-[8px] shrink-0 items-center justify-center rounded-full border border-[#8c9aa6] pb-[2px] text-[9px] font-bold">»</div>
      </div>
      <div className="flex h-[26px] items-center justify-end gap-[6px] bg-[#bec3cb] pr-[5px] pb-[2px]">
        <svg className="size-[11px]" viewBox="0 0 11 11" fill="none" stroke="#555"><rect x=".5" y=".5" width="10" height="10" rx="2" /><path d="M2.500 5h3.500v3.500H2.500zM4.500 5V2.700h3.800V6.500H6" /></svg>
        <svg className="h-[8px] w-[5px]" viewBox="0 0 6 9"><path d="M5 1L1.200 4.500 5 8" stroke="#111" strokeWidth="1.800" fill="none" /></svg>
      </div>
      <div className="flex h-[100px] bg-[#f7f7f7]">
        <div className="flex grow flex-col justify-end border-l border-[#d5d5d5] pb-[19px] pl-[6px] font-['DejaVu_Sans_Mono',monospace] text-[13.300px] leading-[16px] text-black">Calculation complete.</div>
        <div className="flex w-[62px] gap-[5px]">
          <div className="flex h-[24px] w-[28px] items-center justify-center rounded-sm border border-[#c4c4c4] bg-[#f4f4f4]"><svg className="size-[15px]" viewBox="0 0 15 15" fill="none"><path d="M7.500 1.500L14 13.500H1z" stroke="#e3b85a" strokeWidth="1.300" /><path d="M7.500 5.500v4M7.500 10.500v1.500" stroke="#666" strokeWidth="1.300" /></svg></div>
          <div className="mt-px flex h-[23px] w-[27px] items-center justify-center border border-[#333] bg-linear-to-b from-[#f21c1c] to-[#e87070]"><svg className="size-[16px]" viewBox="0 0 16 16" fill="none"><circle cx="8" cy="8" r="6.700" stroke="#7a1414" strokeWidth="1.200" /><path d="M8 4.500v7" stroke="#c0501a" strokeWidth="1.600" /></svg></div>
        </div>
        <div className="flex w-[15px] flex-col items-stretch bg-[#5b6170]">
          <div className="flex h-[20px] items-center justify-center bg-[#9aabb3]"><Caret up /></div>
          <div className="h-[25px] bg-[#c3cad1]" />
          <div className="mt-auto flex h-[20px] items-center justify-center bg-[#9aabb3]"><Caret /></div>
          <div className="flex h-[15px] justify-end bg-[#f7f7f7]"><Check on /></div>
        </div>
      </div>
      <div className="h-[3px] bg-[#bec3cb]" />
    </div>
  );
}

/* ---------- vectors dialog ---------- */

function Select({ children, pr = "pr-[6px]", pl = "pl-[5px]" }: { pr?: string; pl?: string } & Kids) {
  return (
    <div className={"flex h-[23px] shrink-0 items-center justify-between rounded border border-[#b8c4d0] pt-[2px] " + pr + " " + pl}>
      {children}
      <span className="flex pb-[4px]"><Caret /></span>
    </div>
  );
}

function Btn({ children, w, dark = false }: { w: string; dark?: boolean } & Kids) {
  return (
    <div className={"flex h-[27px] shrink-0 items-center justify-center rounded border border-[#535c69] pt-[3px] font-bold whitespace-nowrap " + w + (dark ? " bg-[#535c69] text-white" : " text-[#535f6e]")}>{children}</div>
  );
}

function ListBtn({ k }: { k: string }) {
  return (
    <div className="flex h-[28px] w-[28px] shrink-0 items-center justify-center rounded-[5px] border border-[#535c69] bg-[#fdfdfd]">
      <svg className="size-[20px]" viewBox="0 0 20 20" fill="none">
        <path d={k === "m" ? "M2 3h15M2 7h15M2 11h11" : "M2 3h11M2 7h9M2 11h4"} stroke="#111" strokeWidth="2" />
        {k === "o" && <circle cx="14" cy="13.500" r="4" stroke="#c98f12" strokeWidth="2" />}
        {k === "m" && <path d="M13 15h7l-3.500 3.500z" fill="#8a929b" />}
        {k === "v" && <path d="M8.500 13l4 4L19.500 8.500" stroke="#c98f12" strokeWidth="2" />}
        {k === "x" && <path d="M10.500 11l7 7M17.500 11l-7 7" stroke="#c98f12" strokeWidth="2.200" />}
      </svg>
    </div>
  );
}

function Dialog() {
  const lab = "flex shrink-0 items-end leading-[14px]";
  const opt = "flex h-[21px] items-center gap-[6px] tracking-[-0.100px]";
  return (
    <div className="absolute top-[94px] left-[319px] flex h-[572px] w-[509px] flex-col border border-[#6e6e6e] bg-[#fdfdfd] text-black shadow-[4px_6px_14px_rgba(0,0,0,0.45)]">
      <div className="flex h-[30px] shrink-0 items-center bg-white pb-[3px] pl-[8px]">
        <FluentIcon />
        <span className="pt-px pl-[5px] text-[12px] tracking-[-0.200px]">Vectors</span>
        <svg className="mr-[9px] ml-auto size-[11px]" viewBox="0 0 11 11"><path d="M.5.5l10 10M10.500.5l-10 10" stroke="#111" strokeWidth="1.200" /></svg>
      </div>
      <div className="h-[478px] shrink-0 overflow-hidden pr-[6px] pl-[4px]">
        <div className={lab + " h-[19px] tracking-[-0.150px]"}>Vector Name</div>
        <div className="mt-[2px] -ml-[3px] flex h-[20px] w-[423px] items-center rounded border border-[#b8c4d0] pt-px pl-[5px] tracking-[-0.150px]">vector-1</div>
        <div className="flex w-[520px]">
          <div className="w-[134px] shrink-0">
            <div className={lab + " h-[22px] font-bold tracking-[-0.150px] text-[#34404f]"}>Options</div>
            <div className="mt-[2px] -ml-px h-[114px] border border-[#cdd3e0] pt-px pl-[9px]">
              <div className={opt}><Check on /><span className="pt-[3px]">Global Range</span></div>
              <div className={opt}><Check on /><span className="pt-[3px]">Auto Range</span></div>
              <div className={opt + " text-[#8a8a8a]"}><Check dis /><span className="pt-[3px]">Clip to Range</span></div>
              <div className={opt}><Check on /><span className="pt-[3px]">Auto Scale</span></div>
              <div className={opt}><Check /><span className="pt-[3px]">Draw Mesh</span></div>
            </div>
            <div className={lab + " h-[20px] tracking-[-0.300px]"}>Style</div>
            <div className="mt-[2px] w-[135px]"><Select pr="pr-[7px]">3d arrow</Select></div>
            <div className="flex gap-[4px]">
              <div className="w-[60px]">
                <div className={lab + " h-[20px] tracking-[-0.200px]"}>Scale</div>
                <div className="mt-[4px] flex h-[20px] items-center rounded border border-[#b8c4d0] pl-[3px]">1</div>
              </div>
              <div className="w-[68px]">
                <div className={lab + " h-[20px]"}>Skip</div>
                <div className="mt-[4px] flex h-[23px] items-center justify-between rounded border border-[#b8c4d0] pr-[3px] pl-[7px]">
                  <span className="pt-[2px]">0</span>
                  <span className="flex flex-col gap-[6px]"><Caret up /><Caret /></span>
                </div>
              </div>
            </div>
            <div className="mt-[5px] flex flex-col gap-[8px]">
              <Btn w="w-[118px] tracking-[-0.080px]">Vector Options...</Btn>
              <Btn w="w-[124px] tracking-[-0.050px]">Custom Vectors...</Btn>
              <Btn w="w-[134px] tracking-[-0.350px]">Colormap Options...</Btn>
            </div>
          </div>
          <div className="ml-[7px] w-[356px] shrink-0">
            <div className={lab + " mb-[2px] h-[22px]"}>Vectors of</div>
            <Select>Velocity</Select>
            <div className={lab + " mb-[2px] h-[22px]"}>Phase</div>
            <Select>mixture</Select>
            <div className={lab + " mb-[2px] h-[22px]"}>Color by</div>
            <Select>Velocity...</Select>
            <div className="mt-[8px] tracking-[-0.100px]"><Select pl="pl-[7px]">Velocity Magnitude</Select></div>
            <div className={lab + " mb-[2px] h-[22px]"}>Phase</div>
            <Select>mixture</Select>
            <div className={lab + " mb-[4px] h-[22px] text-[#8a8a8a]"}><span className="w-[124px]">Min (m/s)</span>Max (m/s)</div>
            <div className="flex gap-[4px] text-[#7a7a7a]">
              <div className="flex h-[20px] w-[120px] items-center rounded border border-[#c0c0c0] bg-[#ebebeb] pt-px pl-[3px] tracking-[-0.200px]">0.006808828</div>
              <div className="flex h-[20px] w-[120px] items-center rounded border border-[#c0c0c0] bg-[#ebebeb] pt-px pl-[3px] tracking-[-0.200px]">8.913925</div>
            </div>
            <div className="mt-[8px] flex h-[28px] w-[356px] items-center gap-[8px] overflow-hidden">
              <div className="flex w-[213px] shrink-0 items-center">
                <span className="w-[56px] pt-px">Surfaces</span>
                <div className="flex h-[20px] w-[158px] items-center rounded border border-[#b8c4d0] pt-px pl-[2px] text-[#8a8a8a]">Filter Text</div>
              </div>
              <ListBtn k="o" /><ListBtn k="m" /><ListBtn k="v" /><ListBtn k="x" />
            </div>
            <div className="mt-[3px] flex h-[102px] w-[356px] justify-between overflow-hidden rounded border-2 border-r-0 border-[#dedede] bg-white">
              <div className="pt-px pl-[3px] leading-[17px] tracking-[-0.120px]">
                <div>air</div><div>default-interior</div><div>default-interior:008</div><div>default-interior:010</div><div>poutlet</div><div>wall-bottom</div>
              </div>
              <div className="flex w-[15px] flex-col bg-[#dfe3e6]">
                <div className="flex h-[20px] items-center justify-center bg-[#9aabb3]"><Caret up /></div>
                <div className="h-[32px] bg-[#5b6170]" />
                <div className="mt-auto flex h-[20px] items-center justify-center bg-[#9aabb3]"><Caret /></div>
              </div>
            </div>
            <div className="mt-[4px] ml-px flex h-[27px] w-[101px] items-center rounded border border-[#535c69] pt-[4px] pl-[3px] font-bold tracking-[-0.100px] whitespace-nowrap text-[#535f6e]">New Surface<span className="mt-[8px] ml-[4px]"><Caret small c="#9aa2aa" /></span></div>
          </div>
        </div>
      </div>
      <div className="mx-[4px] mt-[6px] h-px shrink-0 bg-[#9b9b9b]" />
      <div className="mt-[13px] ml-[114px] flex gap-[8px]">
        <Btn w="w-[99px]" dark>Save/Display</Btn>
        <Btn w="w-[69px]">Compute</Btn>
        <Btn w="w-[46px]">Close</Btn>
        <Btn w="w-[40px]">Help</Btn>
      </div>
      <svg className="mt-auto ml-auto size-[14px]" viewBox="0 0 14 14"><path d="M0 14L14 0M4 14L14 4M8 14l6-6M12 14l2-2" stroke="#999" strokeDasharray="2 1" /></svg>
    </div>
  );
}

/* ---------- call-outs ---------- */

function Callouts() {
  return (
    <svg className="pointer-events-none absolute top-0 left-0 h-[702px] w-[1364px]" viewBox="0 0 1364 702" fill="none" stroke="#ed1c24" strokeWidth="3">
      <rect x="324.500" y="127.500" width="496" height="474" rx="17" />
      <ellipse cx="94.500" cy="548" rx="54" ry="12" strokeWidth="2.500" />
      <ellipse cx="479.500" cy="640" rx="65" ry="18" strokeWidth="2.500" />
      <path d="M793.500 354.500H838V339.500L883 369L838 398V383.500H793.500z" strokeWidth="2.600" />
      <g fill="#ed1c24" stroke="none" fontFamily="Open Sans, sans-serif" fontWeight="bold" fontSize="18">
        <text x="153" y="555">1</text>
        <text x="773" y="154">2</text>
        <text x="402" y="628">3</text>
      </g>
    </svg>
  );
}

export default function App() {
  return (
    <div className="relative flex h-[702px] w-[1364px] flex-col overflow-hidden bg-white font-['DejaVu_Sans_Condensed','DejaVu_Sans',sans-serif] text-[13px] leading-[16px] text-[#151515]">
      <QuickBar />
      <MenuBar />
      <Ribbon />
      <div className="mt-[3px] flex h-[519px] gap-[3px]">
        <Outline />
        <div className="flex">
          <Task />
          <Graphics />
        </div>
      </div>
      <Dialog />
      <Callouts />
    </div>
  );
}
